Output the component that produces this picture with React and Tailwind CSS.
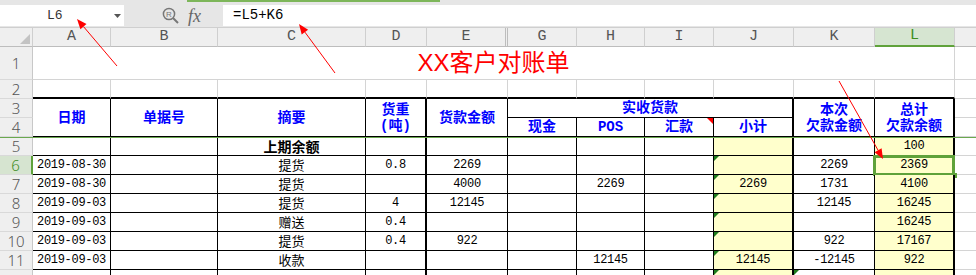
import React from "react";

const monoF = "font-['Liberation_Mono','Noto_Sans_CJK_SC',monospace]";

const cols = ["A", "B", "C", "D", "E", "G", "H", "I", "J", "K", "L"];

// right border per column inside the table (D, J, L are thick)
const rightB = {
  A: "border-r border-r-black",
  B: "border-r border-r-black",
  C: "border-r border-r-black",
  D: "border-r-2 border-r-black",
  E: "border-r border-r-black",
  G: "border-r border-r-black",
  H: "border-r border-r-black",
  I: "border-r border-r-black",
  J: "border-r-2 border-r-black",
  K: "border-r border-r-black",
  L: "border-r-2 border-r-black",
};

const rows = [
  { n: 5, C: "上期余额", L: "100" },
  { n: 6, A: "2019-08-30", C: "提货", D: "0.8", E: "2269", K: "2269", L: "2369" },
  { n: 7, A: "2019-08-30", C: "提货", E: "4000", H: "2269", J: "2269", K: "1731", L: "4100" },
  { n: 8, A: "2019-09-03", C: "提货", D: "4", E: "12145", K: "12145", L: "16245" },
  { n: 9, A: "2019-09-03", C: "赠送", D: "0.4", L: "16245" },
  { n: 10, A: "2019-09-03", C: "提货", D: "0.4", E: "922", K: "922", L: "17167" },
  { n: 11, A: "2019-09-03", C: "收款", H: "12145", J: "12145", K: "-12145", L: "922" },
  { n: 12 },
];

function RowHead({ n, active }) {
  return active ? (
    <div className="flex items-center justify-center bg-[#d6e4d0] border-r-2 border-b border-r-[#5fa23a] border-b-[#d9d9d9] text-[#3d8c1e] text-[15px] font-['Noto_Sans',sans-serif] font-light">
      {n}
    </div>
  ) : (
    <div className="flex items-center justify-center bg-[#efefef] border-r border-b border-r-[#c8c8c8] border-b-[#d9d9d9] text-[#555] text-[15px] font-['Noto_Sans',sans-serif] font-light">
      {n}
    </div>
  );
}

function GreenTri() {
  return <span className="absolute left-0 top-0 w-0 h-0 border-t-[5px] border-t-[#1e7d1e] border-r-[5px] border-r-transparent" />;
}

function Head({ className, children }) {
  return (
    <div className={`flex items-center justify-center text-center leading-[16px] text-[14px] font-bold text-[#0000ff] ${monoF} ${className}`}>
      {children}
    </div>
  );
}

function TopBar() {
  return (
    <div className="relative h-[28px] bg-[#e6e6e6] border-b border-b-[#cfcfcf] flex items-start pt-[5px]">
      <div className="absolute top-0 left-[187px] w-[253px] h-[2px] bg-[#7db65a]" />
      <div className="w-[124px] h-[21px] bg-white flex items-center pl-[47px] pr-[3px]">
        <span className={`${monoF} text-[13px] text-[#333]`}>L6</span>
        <svg className="ml-auto" width="7" height="4" viewBox="0 0 7 4">
          <path d="M0 0h7L3.5 4z" fill="#555" />
        </svg>
      </div>
      <div className="w-[99px] h-[21px] flex items-center">
        <svg className="ml-[38px]" width="17" height="17" viewBox="0 0 17 17">
          <circle cx="7" cy="7" r="5.6" fill="none" stroke="#777" strokeWidth="1.5" />
          <text x="7" y="10" textAnchor="middle" fontSize="8" fontFamily="Liberation Sans" fill="#777">R</text>
          <path d="M11 11l5 5" stroke="#777" strokeWidth="2" />
        </svg>
        <span className="ml-[9px] font-['Liberation_Serif',serif] italic text-[18px] text-[#666] leading-none">fx</span>
      </div>
      <div className="flex-1 h-[21px] bg-white flex items-center pl-[10px]">
        <span className={`${monoF} text-[14px] text-black`}>=L5+K6</span>
      </div>
    </div>
  );
}

export default function App() {
  return (
    <div className="relative w-[976px] h-[275px] overflow-hidden bg-white">
      <TopBar />
      <div className="grid grid-cols-[33px_78px_107px_148px_61px_81px_69px_68px_69px_80px_81px_80px_21px] grid-rows-[19px_33px_19px_19px_19px_19px_19px_19px_19px_19px_19px_19px_19px]">
        {/* column headers */}
        <div className="relative bg-[#efefef] border-r border-b border-r-[#cfcfcf] border-b-[#bdbdbd]">
          <svg className="absolute left-[20px] top-[6px]" width="10" height="10" viewBox="0 0 10 10">
            <path d="M10 0v10H0z" fill="#c3c3c3" />
          </svg>
        </div>
        {cols.map((c) =>
          c === "L" ? (
            <div key={c} className={`flex items-center justify-center bg-[#d6e5d1] border-r border-b-2 border-r-[#cfcfcf] border-b-[#5fa23a] text-[#3d8c1e] text-[15px] ${monoF}`}>
              {c}
            </div>
          ) : c === "E" ? (
            <div key={c} className={`flex items-center justify-center bg-[#efefef] border-r-[3px] border-double border-b border-r-[#bdbdbd] border-b-[#bdbdbd] text-[#555] text-[15px] ${monoF}`}>
              {c}
            </div>
          ) : (
            <div key={c} className={`flex items-center justify-center bg-[#efefef] border-r border-b border-r-[#cfcfcf] border-b-[#bdbdbd] text-[#555] text-[15px] ${monoF}`}>
              {c}
            </div>
          )
        )}
        <div className="bg-[#efefef] border-b border-b-[#bdbdbd]" />

        {/* row 1: title */}
        <RowHead n={1} />
        <div className="col-span-11 flex items-center justify-center border-r border-b border-r-[#d4d4d4] border-b-[#d4d4d4] text-[24px] text-[#ff0000] font-['Liberation_Sans','Noto_Sans_CJK_SC',sans-serif]">
          XX客户对账单
        </div>
        <div className="border-b border-b-[#d4d4d4]" />

        {/* row 2 */}
        <RowHead n={2} />
        {cols.map((c) => (
          <div key={c} className="border-r border-b-2 border-r-[#d4d4d4] border-b-black" />
        ))}
        <div className="border-b border-b-[#d4d4d4]" />

        {/* rows 3-4: table header */}
        <RowHead n={3} />
        <Head className={`row-span-2 border-b border-b-black ${rightB.A}`}>日期</Head>
        <Head className={`row-span-2 border-b border-b-black ${rightB.B}`}>单据号</Head>
        <Head className={`row-span-2 border-b border-b-black ${rightB.C}`}>摘要</Head>
        <Head className={`row-span-2 border-b border-b-black ${rightB.D}`}>
          货重
          <br />
          (吨)
        </Head>
        <Head className={`row-span-2 border-b border-b-black ${rightB.E}`}>货款金额</Head>
        <Head className="col-span-4 border-b border-b-black border-r-2 border-r-black">实收货款</Head>
        <Head className={`row-span-2 border-b border-b-black ${rightB.K}`}>
          本次
          <br />
          欠款金额
        </Head>
        <Head className={`row-span-2 border-b border-b-black ${rightB.L}`}>
          总计
          <br />
          欠款余额
        </Head>
        <div className="border-b border-b-[#d4d4d4]" />
        <RowHead n={4} />
        <Head className={`border-b border-b-black ${rightB.G}`}>现金</Head>
        <Head className={`border-b border-b-black ${rightB.H}`}>POS</Head>
        <Head className={`relative border-b border-b-black ${rightB.I}`}>
          汇款
          <span className="absolute right-0 top-0 w-0 h-0 border-t-[6px] border-t-[#ff0000] border-l-[6px] border-l-transparent" />
        </Head>
        <Head className={`border-b border-b-black ${rightB.J}`}>小计</Head>
        <div className="border-b border-b-[#d4d4d4]" />

        {/* data rows */}
        {rows.map((r) => (
          <React.Fragment key={r.n}>
            <RowHead n={r.n < 12 ? r.n : ""} active={r.n === 6} />
            {cols.map((c) => {
              const yellow = c === "J" || c === "L" ? "bg-[#ffffcc]" : "";
              const v = r[c];
              const isText = c === "C";
              const bold = r.n === 5 && c === "C";
              return (
                <div
                  key={c}
                  className={`relative flex items-center justify-center border-b border-b-black ${rightB[c]} ${yellow}`}
                >
                  {((c === "J" && r.n >= 6) || (c === "K" && r.n === 12)) && <GreenTri />}
                  {v &&
                    (isText ? (
                      <span className={`text-[13px] text-black font-['Noto_Sans_CJK_SC',sans-serif] ${bold ? "font-bold text-[14px]" : ""}`}>
                        {v}
                      </span>
                    ) : (
                      <span className={`${monoF} text-[12px] tracking-[-0.3px] text-black`}>{v}</span>
                    ))}
                  {r.n === 6 && c === "L" && (
                    <>
                      <span className="absolute left-[-2px] top-[-1px] w-[82px] h-[21px] border-[3px] border-[#5fa23a]" />
                      <span className="absolute left-[77px] top-[17px] w-[5px] h-[5px] bg-[#5fa23a]" />
                    </>
                  )}
                </div>
              );
            })}
            <div className="border-b border-b-[#d4d4d4]" />
          </React.Fragment>
        ))}
      </div>

      {/* freeze pane line */}
      <div className="absolute left-0 right-0 top-[137px] h-px bg-[#6aa84f]" />

      {/* annotation arrows */}
      <svg className="absolute left-0 top-0 pointer-events-none" width="976" height="275" viewBox="0 0 976 275">
        <g stroke="#ff0000" strokeWidth="1" fill="#ff0000">
          <line x1="117" y1="66" x2="83.5" y2="26.6" />
          <polygon points="77,19 86.5,24 80.4,29.2" stroke="none" />
          <line x1="335" y1="73" x2="304.9" y2="32.1" />
          <polygon points="299,24 308.1,29.7 301.7,34.5" stroke="none" />
          <line x1="839" y1="81" x2="878.1" y2="150.3" />
          <polygon points="883,159 881.6,148.3 874.6,152.3" stroke="none" />
        </g>
      </svg>
    </div>
  );
}
